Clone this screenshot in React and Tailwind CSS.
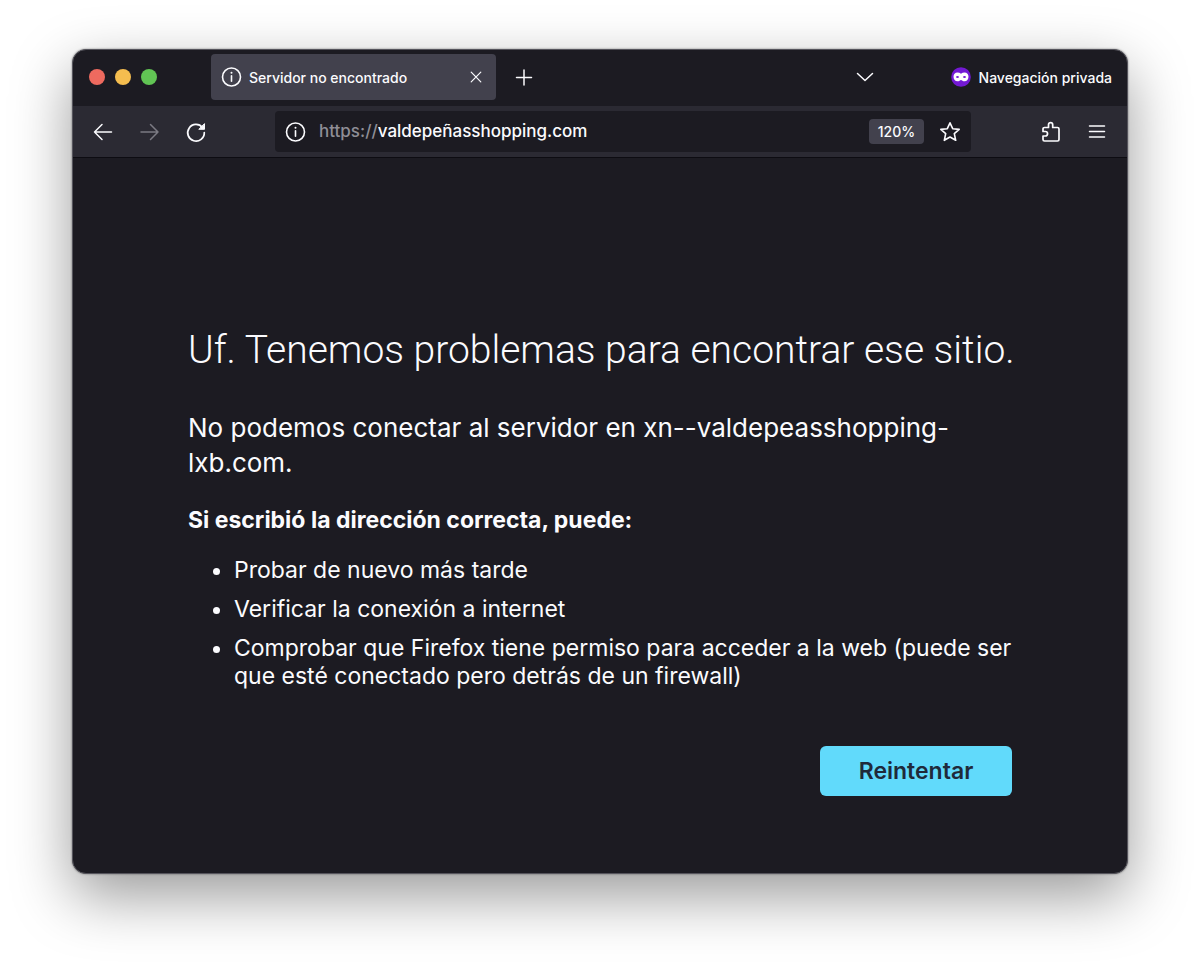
import React, { useState } from "react";

const tips = [
  "Probar de nuevo más tarde",
  "Verificar la conexión a internet",
  "Comprobar que Firefox tiene permiso para acceder a la web (puede ser que esté conectado pero detrás de un firewall)",
];

const Icon = ({ children, className = "size-6", width = 1.5 }) => (
  <svg
    viewBox="0 0 24 24"
    fill="none"
    stroke="currentColor"
    strokeWidth={width}
    strokeLinecap="round"
    strokeLinejoin="round"
    className={`shrink-0 ${className}`}
    aria-hidden="true"
  >
    {children}
  </svg>
);

const InfoIcon = () => (
  <Icon width={1.6}>
    <circle cx="12.5" cy="12" r="9" />
    <path d="M12.5 10.8v5.4" />
    <circle cx="12.5" cy="7.8" r="1" fill="currentColor" stroke="none" />
  </Icon>
);

const MaskIcon = () => (
  <svg viewBox="0 0 20 20" className="size-5 shrink-0" aria-hidden="true">
    <circle cx="10" cy="10" r="9.8" fill="#7319d4" />
    <path
      fill="#fff"
      fillRule="evenodd"
      d="M10 6.700c1-.8 2.200-1.200 3.500-1.200 2.500 0 4 1.800 4 4.200 0 2.700-1.600 4.600-4 4.600-1.600 0-2.600-1.400-3.500-1.400s-1.900 1.400-3.500 1.400c-2.400 0-4-1.900-4-4.600 0-2.400 1.500-4.200 4-4.200 1.300 0 2.500.4 3.500 1.200zM4.900 10c.3.700.9 1.100 1.600 1.100s1.300-.4 1.600-1.100c-.3-.5-.9-.9-1.600-.9s-1.300.4-1.600.9zm7 0c.3.700.9 1.100 1.600 1.100s1.300-.4 1.600-1.100c-.3-.5-.9-.9-1.600-.9s-1.300.4-1.600.9z"
    />
  </svg>
);

const IconButton = ({ label, children, disabled }) => (
  <button
    type="button"
    aria-label={label}
    disabled={disabled}
    className="flex size-10 shrink-0 items-center justify-center rounded disabled:text-[#7b7a83]"
  >
    {children}
  </button>
);

const TitleBar = () => (
  <header className="flex h-14 items-center pb-[2px] pl-4 pr-[15px]">
    <div className="flex shrink-0 gap-[10px]">
      <button type="button" aria-label="Cerrar" className="size-4 rounded-full bg-[#ee6a5f]" />
      <button type="button" aria-label="Minimizar" className="size-4 rounded-full bg-[#f5bd4f]" />
      <button type="button" aria-label="Maximizar" className="size-4 rounded-full bg-[#61c454]" />
    </div>

    <div className="ml-[54px] flex h-[46px] w-[285px] items-center rounded bg-[#42414d] pl-2">
      <InfoIcon />
      <span className="ml-[6px] flex-1 truncate text-[14px] font-medium">
        Servidor no encontrado
      </span>
      <IconButton label="Cerrar pestaña">
        <Icon width={1.2}>
          <path d="M7.200 7.200l9.600 9.600M16.800 7.200l-9.600 9.600" />
        </Icon>
      </IconButton>
    </div>
    <div className="ml-2">
      <IconButton label="Nueva pestaña">
        <Icon>
          <path d="M12 5v15M4.500 12.500h15" />
        </Icon>
      </IconButton>
    </div>

    <div className="ml-auto mr-[66px]">
      <IconButton label="Mostrar todas las pestañas">
        <Icon>
          <path d="M4.500 8.500l7.500 7 7.500-7" />
        </Icon>
      </IconButton>
    </div>
    <div className="flex shrink-0 items-center gap-2 text-[14px] font-medium">
      <MaskIcon />
      <span>Navegación privada</span>
    </div>
  </header>
);

const Toolbar = () => {
  const [url, setUrl] = useState("valdepeñasshopping.com");
  return (
    <nav className="flex h-[52px] items-center border-b border-[#0d0c12] bg-[#2b2a33] px-[10px]">
      <div className="flex shrink-0 gap-[6px]">
        <IconButton label="Atrás">
          <Icon>
            <path d="M20.500 12h-17M11 4.500L3.500 12l7.500 7.500" />
          </Icon>
        </IconButton>
        <IconButton label="Adelante" disabled>
          <Icon>
            <path d="M4 12h17M13.500 4.500l7.500 7.500-7.500 7.500" />
          </Icon>
        </IconButton>
        <IconButton label="Recargar">
          <Icon width={1.7}>
            <path d="M19.500 7.600A8.300 8.300 0 1 0 21.300 12.500" />
            <path d="M21.500 4v5.300h-5.300z" fill="currentColor" strokeWidth="1" />
          </Icon>
        </IconButton>
      </div>

      <div className="mx-15 flex h-[41px] min-w-0 flex-1 items-center rounded bg-[#1c1b22] pl-2 pr-[1px]">
        <InfoIcon />
        <label htmlFor="url" className="ml-3 text-[17px] font-medium text-[#8f8e96]">
          https://
        </label>
        <input
          id="url"
          type="text"
          value={url}
          onChange={(e) => setUrl(e.target.value)}
          className="min-w-0 flex-1 bg-transparent text-[17px] font-medium outline-none"
        />
        <button
          type="button"
          className="h-[25px] w-[55px] rounded bg-[#42414d] text-[14px] font-medium"
        >
          120%
        </button>
        <div className="ml-[6px]">
          <IconButton label="Añadir a marcadores">
            <Icon width={1.6}>
              <path d="M12 2.800l2.700 5.900 6.500.7-4.900 4.300 1.400 6.600L12 17l-5.700 3.300 1.400-6.600-4.900-4.300 6.500-.7z" />
            </Icon>
          </IconButton>
        </div>
      </div>

      <div className="flex shrink-0 gap-[6px]">
        <IconButton label="Extensiones">
          <Icon width={1.7}>
            <path d="M4 11.500V9a1.500 1.500 0 0 1 1.500-1.500H9.500V4.700a2.100 2.100 0 0 1 4.200 0v2.800H18.500A1.500 1.500 0 0 1 20 9v10.500A1.500 1.500 0 0 1 18.500 21H5.500A1.500 1.500 0 0 1 4 19.500V16h2.300a2.250 2.250 0 0 0 0-4.500z" />
          </Icon>
        </IconButton>
        <IconButton label="Menú">
          <Icon>
            <path d="M4.500 6h15M4.500 11.500h15M4.500 17h15" />
          </Icon>
        </IconButton>
      </div>
    </nav>
  );
};

const ErrorPage = () => (
  <main className="pb-[77px] pl-[115px] pr-[103px] pt-[168px]">
    <h1 className="font-['Roboto',sans-serif] text-[39px] font-light leading-[48px]">
      Uf. Tenemos problemas para encontrar ese sitio.
    </h1>
    <p className="mt-9 text-[26px] leading-[35px]">
      No podemos conectar al servidor en xn--valdepeasshopping-lxb.com.
    </p>
    <p className="mt-6 text-[23px] font-bold leading-[32px]">
      Si escribió la dirección correcta, puede:
    </p>
    <ul className="mt-5 list-disc space-y-[11px] pl-[46px] text-[23px] leading-[28px]">
      {tips.map((tip) => (
        <li key={tip}>{tip}</li>
      ))}
    </ul>
    <div className="mt-14 flex justify-end pr-3">
      <button
        type="button"
        className="h-[50px] w-[192px] rounded-md bg-[#61dafb] text-[23px] font-semibold text-[#1f2a3a]"
      >
        Reintentar
      </button>
    </div>
  </main>
);

export default function App() {
  return (
    <div className="min-h-screen overflow-hidden bg-white px-[72px] pb-[95px] pt-[49px] font-['Inter',sans-serif]">
      <div className="overflow-hidden rounded-[14px] border border-[#55545c] bg-[#1c1b22] text-[#fbfbfe] shadow-[0_22px_60px_rgba(0,0,0,0.4),0_0_2px_rgba(0,0,0,0.5)]">
        <TitleBar />
        <Toolbar />
        <ErrorPage />
      </div>
    </div>
  );
}
